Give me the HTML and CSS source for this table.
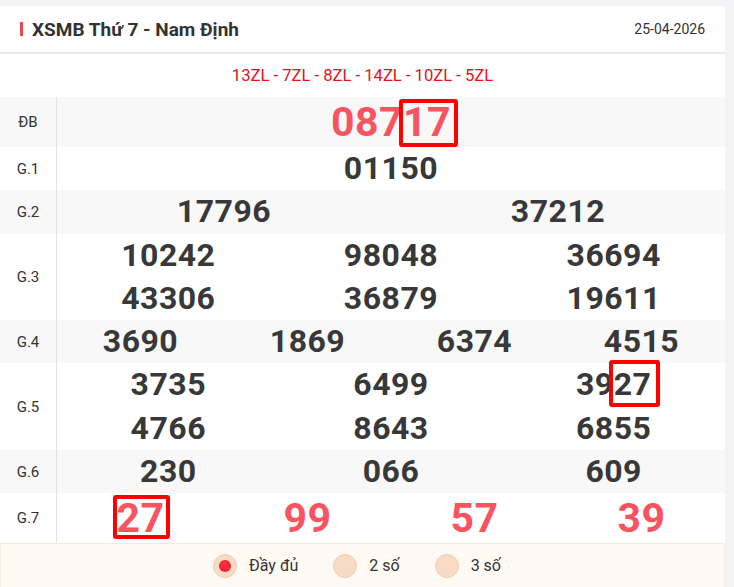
FILE: index.html
```html
<!DOCTYPE html>
<html lang="vi">
<head>
    <meta charset="UTF-8">
    <meta name="viewport" content="width=device-width, initial-scale=1.0">
    <title>XSMB Thứ 7</title>
    <link rel="stylesheet" href="styles.css">
</head>
<body>
    <div class="card">
        <div class="card-head">
            <h2 class="title">XSMB Thứ 7 - Nam Định</h2>
            <span class="date">25-04-2026</span>
        </div>

        <div class="codes">13ZL - 7ZL - 8ZL - 14ZL - 10ZL - 5ZL</div>

        <div class="results">
            <div class="row row-alt">
                <div class="label">ĐB</div>
                <div class="nums cols-1">
                    <span class="num num-big">087<span class="hl hl-db">17</span></span>
                </div>
            </div>
            <div class="row">
                <div class="label">G.1</div>
                <div class="nums cols-1">
                    <span class="num">01150</span>
                </div>
            </div>
            <div class="row row-alt">
                <div class="label">G.2</div>
                <div class="nums cols-2">
                    <span class="num">17796</span>
                    <span class="num">37212</span>
                </div>
            </div>
            <div class="row">
                <div class="label">G.3</div>
                <div class="nums cols-3">
                    <span class="num">10242</span>
                    <span class="num">98048</span>
                    <span class="num">36694</span>
                    <span class="num">43306</span>
                    <span class="num">36879</span>
                    <span class="num">19611</span>
                </div>
            </div>
            <div class="row row-alt">
                <div class="label">G.4</div>
                <div class="nums cols-4">
                    <span class="num">3690</span>
                    <span class="num">1869</span>
                    <span class="num">6374</span>
                    <span class="num">4515</span>
                </div>
            </div>
            <div class="row">
                <div class="label">G.5</div>
                <div class="nums cols-3">
                    <span class="num">3735</span>
                    <span class="num">6499</span>
                    <span class="num">39<span class="hl hl-g5">27</span></span>
                    <span class="num">4766</span>
                    <span class="num">8643</span>
                    <span class="num">6855</span>
                </div>
            </div>
            <div class="row row-alt">
                <div class="label">G.6</div>
                <div class="nums cols-3">
                    <span class="num">230</span>
                    <span class="num">066</span>
                    <span class="num">609</span>
                </div>
            </div>
            <div class="row">
                <div class="label">G.7</div>
                <div class="nums cols-4">
                    <span class="num num-big"><span class="hl hl-g7">27</span></span>
                    <span class="num num-big">99</span>
                    <span class="num num-big">57</span>
                    <span class="num num-big">39</span>
                </div>
            </div>
        </div>

        <div class="options">
            <label class="opt"><span class="radio radio-on"></span>Đầy đủ</label>
            <label class="opt"><span class="radio"></span>2 số</label>
            <label class="opt"><span class="radio"></span>3 số</label>
        </div>
    </div>
</body>
</html>
```

FILE: styles.css
```css
body {
    margin: 0;
    padding: 6px 9px 0 0;
    background-color: #f3f3f5;
    font-family: Roboto, "Liberation Sans", Arial, sans-serif;
    color: #333;
}
.card {
    background-color: #fff;
}
.card-head {
    display: flex;
    align-items: center;
    justify-content: space-between;
    height: 46px;
    padding: 0 20px;
    border-bottom: 2px solid #ebe9eb;
}
.title {
    display: flex;
    align-items: center;
    margin: 0;
    font-size: 19px;
    font-weight: 700;
    color: #333;
}
.title::before {
    content: "";
    width: 3px;
    height: 14px;
    margin-right: 9px;
    background-color: #e84b4f;
}
.date {
    font-size: 14px;
    color: #333;
}
.codes {
    height: 43px;
    line-height: 43px;
    text-align: center;
    font-size: 16.6px;
    color: #e3121c;
}
.row {
    display: grid;
    grid-template-columns: 57px 1fr;
}
.row-alt {
    background-color: #f8f8f8;
}
.label {
    display: flex;
    align-items: center;
    justify-content: center;
    border-right: 1px solid #e2e2e2;
    font-size: 15px;
}
.nums {
    display: grid;
}
.cols-1 { grid-template-columns: 1fr; }
.cols-2 { grid-template-columns: repeat(2, 1fr); }
.cols-3 { grid-template-columns: repeat(3, 1fr); }
.cols-4 { grid-template-columns: repeat(4, 1fr); }
.num {
    text-align: center;
    font-size: 32px;
    font-weight: 700;
    line-height: 43.3px;
    letter-spacing: 0.5px;
    color: #383838;
}
.num-big {
    font-size: 41px;
    line-height: 50px;
    color: #f85360;
}
.hl {
    position: relative;
}
.hl::after {
    content: "";
    position: absolute;
    border: 4px solid #ff0000;
    border-radius: 3px;
}
.hl-db::after { left: -4px; right: -7px; top: 1px; bottom: -1px; }
.hl-g5::after { left: -5px; right: -9px; top: -5px; bottom: -4px; }
.hl-g7::after { left: -3px; right: -5px; top: 1px; bottom: 3px; }
.options {
    display: flex;
    justify-content: center;
    align-items: center;
    gap: 35px;
    height: 43px;
    padding-right: 11px;
    background-color: #fffaf3;
    border: 1px solid #f4ebe0;
    border-bottom: none;
    font-size: 16px;
    color: #333;
}
.opt {
    display: flex;
    align-items: center;
    gap: 12px;
    cursor: pointer;
}
.radio {
    display: flex;
    align-items: center;
    justify-content: center;
    box-sizing: border-box;
    width: 24px;
    height: 24px;
    border-radius: 50%;
    background-color: #f7dbc5;
    border: 1px solid #f1cdb3;
}
.radio-on::after {
    content: "";
    width: 12px;
    height: 12px;
    border-radius: 50%;
    background: radial-gradient(circle at 50% 40%, #ff3040, #ec1c2c);
}
```
